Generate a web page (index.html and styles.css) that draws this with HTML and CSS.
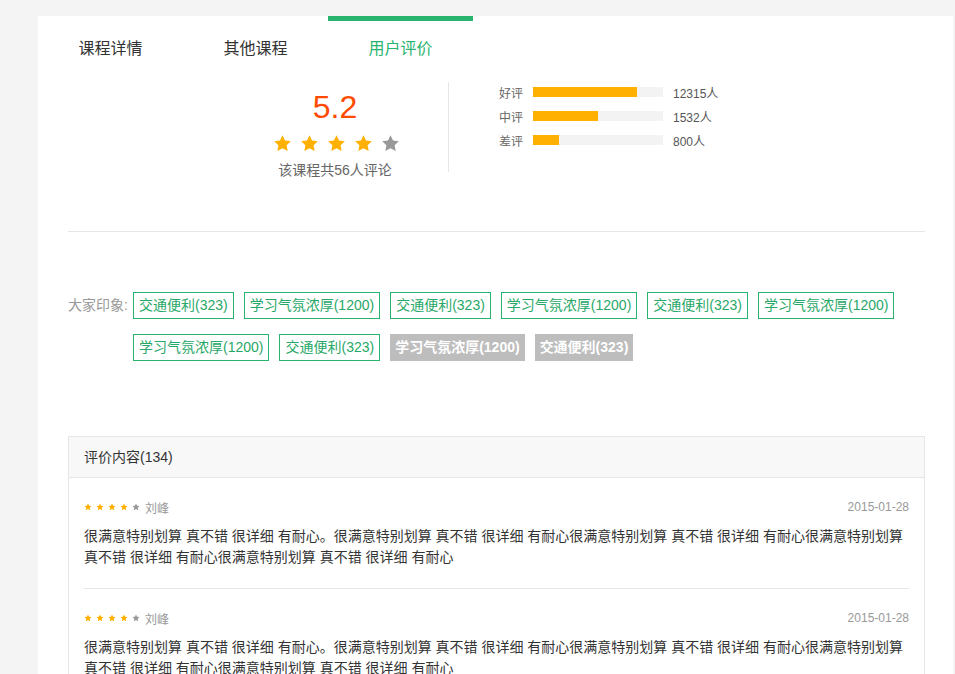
FILE: index.html
```html
<!DOCTYPE html>
<html lang="zh-CN">
<head>
<meta charset="utf-8">
<title>用户评价</title>
<link rel="stylesheet" href="styles.css">
</head>
<body>
<div class="page">
  <nav class="tabs">
    <a class="tab">课程详情</a>
    <a class="tab">其他课程</a>
    <a class="tab active">用户评价</a>
  </nav>

  <div class="inner">
    <section class="summary">
      <div class="score">
        <div class="score-num">5.2</div>
        <div class="stars big">
          <svg viewBox="0 0 24 24"><polygon class="on" points="12,1.5 15.2,8.1 22.5,9.1 17.2,14.2 18.5,21.5 12,18 5.5,21.5 6.8,14.2 1.5,9.1 8.8,8.1"/></svg>
          <svg viewBox="0 0 24 24"><polygon class="on" points="12,1.5 15.2,8.1 22.5,9.1 17.2,14.2 18.5,21.5 12,18 5.5,21.5 6.8,14.2 1.5,9.1 8.8,8.1"/></svg>
          <svg viewBox="0 0 24 24"><polygon class="on" points="12,1.5 15.2,8.1 22.5,9.1 17.2,14.2 18.5,21.5 12,18 5.5,21.5 6.8,14.2 1.5,9.1 8.8,8.1"/></svg>
          <svg viewBox="0 0 24 24"><polygon class="on" points="12,1.5 15.2,8.1 22.5,9.1 17.2,14.2 18.5,21.5 12,18 5.5,21.5 6.8,14.2 1.5,9.1 8.8,8.1"/></svg>
          <svg viewBox="0 0 24 24"><polygon class="off" points="12,1.5 15.2,8.1 22.5,9.1 17.2,14.2 18.5,21.5 12,18 5.5,21.5 6.8,14.2 1.5,9.1 8.8,8.1"/></svg>
        </div>
        <div class="score-text">该课程共56人评论</div>
      </div>
      <div class="vdivider"></div>
      <div class="bars">
        <div class="bar-row">
          <span class="bar-label">好评</span>
          <span class="bar"><span class="bar-fill" style="width:104px"></span></span>
          <span class="bar-count">12315人</span>
        </div>
        <div class="bar-row">
          <span class="bar-label">中评</span>
          <span class="bar"><span class="bar-fill" style="width:65px"></span></span>
          <span class="bar-count">1532人</span>
        </div>
        <div class="bar-row">
          <span class="bar-label">差评</span>
          <span class="bar"><span class="bar-fill" style="width:26px"></span></span>
          <span class="bar-count">800人</span>
        </div>
      </div>
    </section>

    <hr class="hline">

    <section class="impress">
      <div class="impress-label">大家印象:</div>
      <div class="tags">
        <span class="tag">交通便利(323)</span>
        <span class="tag">学习气氛浓厚(1200)</span>
        <span class="tag">交通便利(323)</span>
        <span class="tag">学习气氛浓厚(1200)</span>
        <span class="tag">交通便利(323)</span>
        <span class="tag">学习气氛浓厚(1200)</span>
        <span class="tag">学习气氛浓厚(1200)</span>
        <span class="tag">交通便利(323)</span>
        <span class="tag grey">学习气氛浓厚(1200)</span>
        <span class="tag grey">交通便利(323)</span>
      </div>
    </section>

    <section class="reviews">
      <div class="reviews-head">评价内容(134)</div>
      <div class="review">
        <div class="review-meta">
          <div class="stars small">
            <svg viewBox="0 0 24 24"><polygon class="on" points="12,1.5 15.2,8.1 22.5,9.1 17.2,14.2 18.5,21.5 12,18 5.5,21.5 6.8,14.2 1.5,9.1 8.8,8.1"/></svg>
            <svg viewBox="0 0 24 24"><polygon class="on" points="12,1.5 15.2,8.1 22.5,9.1 17.2,14.2 18.5,21.5 12,18 5.5,21.5 6.8,14.2 1.5,9.1 8.8,8.1"/></svg>
            <svg viewBox="0 0 24 24"><polygon class="on" points="12,1.5 15.2,8.1 22.5,9.1 17.2,14.2 18.5,21.5 12,18 5.5,21.5 6.8,14.2 1.5,9.1 8.8,8.1"/></svg>
            <svg viewBox="0 0 24 24"><polygon class="on" points="12,1.5 15.2,8.1 22.5,9.1 17.2,14.2 18.5,21.5 12,18 5.5,21.5 6.8,14.2 1.5,9.1 8.8,8.1"/></svg>
            <svg viewBox="0 0 24 24"><polygon class="off" points="12,1.5 15.2,8.1 22.5,9.1 17.2,14.2 18.5,21.5 12,18 5.5,21.5 6.8,14.2 1.5,9.1 8.8,8.1"/></svg>
          </div>
          <span class="review-name">刘峰</span>
          <span class="review-date">2015-01-28</span>
        </div>
        <p class="review-text">很满意特别划算 真不错 很详细 有耐心。很满意特别划算 真不错 很详细 有耐心很满意特别划算 真不错 很详细 有耐心很满意特别划算 真不错 很详细 有耐心很满意特别划算 真不错 很详细 有耐心</p>
      </div>
      <div class="review">
        <div class="review-meta">
          <div class="stars small">
            <svg viewBox="0 0 24 24"><polygon class="on" points="12,1.5 15.2,8.1 22.5,9.1 17.2,14.2 18.5,21.5 12,18 5.5,21.5 6.8,14.2 1.5,9.1 8.8,8.1"/></svg>
            <svg viewBox="0 0 24 24"><polygon class="on" points="12,1.5 15.2,8.1 22.5,9.1 17.2,14.2 18.5,21.5 12,18 5.5,21.5 6.8,14.2 1.5,9.1 8.8,8.1"/></svg>
            <svg viewBox="0 0 24 24"><polygon class="on" points="12,1.5 15.2,8.1 22.5,9.1 17.2,14.2 18.5,21.5 12,18 5.5,21.5 6.8,14.2 1.5,9.1 8.8,8.1"/></svg>
            <svg viewBox="0 0 24 24"><polygon class="on" points="12,1.5 15.2,8.1 22.5,9.1 17.2,14.2 18.5,21.5 12,18 5.5,21.5 6.8,14.2 1.5,9.1 8.8,8.1"/></svg>
            <svg viewBox="0 0 24 24"><polygon class="off" points="12,1.5 15.2,8.1 22.5,9.1 17.2,14.2 18.5,21.5 12,18 5.5,21.5 6.8,14.2 1.5,9.1 8.8,8.1"/></svg>
          </div>
          <span class="review-name">刘峰</span>
          <span class="review-date">2015-01-28</span>
        </div>
        <p class="review-text">很满意特别划算 真不错 很详细 有耐心。很满意特别划算 真不错 很详细 有耐心很满意特别划算 真不错 很详细 有耐心很满意特别划算 真不错 很详细 有耐心很满意特别划算 真不错 很详细 有耐心</p>
      </div>
    </section>
  </div>
</div>
</body>
</html>
```

FILE: styles.css
```css
* { box-sizing: border-box; }

html, body {
  margin: 0;
  padding: 0;
  background: #f4f4f4;
}

body {
  font-family: "Liberation Sans", "Noto Sans CJK SC", sans-serif;
  color: #333;
  font-size: 14px;
}

.page {
  width: 915px;
  margin: 16px 0 0 38px;
  background: #fff;
  min-height: 900px;
}

/* tabs */
.tabs {
  display: flex;
}

.tab {
  width: 145px;
  text-align: center;
  border-top: 5px solid transparent;
  line-height: 55px;
  font-size: 16px;
  color: #333;
}

.tab.active {
  border-top-color: #28b46e;
  color: #28b46e;
}

.inner {
  padding: 0 28px 0 30px;
}

/* summary */
.summary {
  display: flex;
  margin-top: 6px;
  height: 90px;
}

.score {
  width: 160px;
  margin-left: 187px;
  padding-top: 7px;
  text-align: center;
}

.score-num {
  font-size: 32px;
  line-height: 36px;
  color: #ff4a00;
}

.stars {
  display: flex;
  justify-content: center;
}

.stars svg { display: block; }
.stars .on { fill: #ffb000; }
.stars .off { fill: #999; }

.stars.big {
  gap: 8px;
  margin-top: 9px;
  margin-left: 2px;
}

.stars.big svg {
  width: 19px;
  height: 19px;
}

.score-text {
  margin-top: 7px;
  font-size: 14px;
  line-height: 20px;
  color: #666;
}

.vdivider {
  width: 1px;
  margin-left: 33px;
  background: #e6e6e6;
}

.bars {
  padding-left: 50px;
  margin-top: -2px;
}

.bar-row {
  display: flex;
  align-items: center;
  height: 24px;
  font-size: 12px;
  color: #555;
}

.bar-label {
  width: 34px;
  color: #666;
}

.bar {
  width: 130px;
  height: 10px;
  background: #f3f3f3;
  display: flex;
}

.bar-fill {
  height: 10px;
  background: #ffb000;
}

.bar-count {
  margin-left: 10px;
}

.hline {
  margin: 59px 0 0 0;
  border: 0;
  height: 1px;
  background: #e6e6e6;
}

/* impressions */
.impress {
  display: flex;
  margin-top: 60px;
}

.impress-label {
  width: 65px;
  flex: none;
  line-height: 27px;
  color: #999;
  font-size: 14px;
}

.tags {
  display: flex;
  flex-wrap: wrap;
  gap: 15px 10px;
  flex: 1;
}

.tag {
  height: 27px;
  line-height: 25px;
  padding: 0 5px;
  border: 1px solid #28b46e;
  color: #28a868;
  font-size: 14px;
  white-space: nowrap;
}

.tag.grey {
  background: #bdbdbd;
  border-color: #bdbdbd;
  color: #fff;
  font-weight: bold;
  padding: 0 4px;
}

/* reviews */
.reviews {
  margin-top: 75px;
  border: 1px solid #e6e6e6;
}

.reviews-head {
  height: 41px;
  line-height: 40px;
  padding-left: 15px;
  background: #f8f8f8;
  border-bottom: 1px solid #e6e6e6;
  font-size: 14px;
  color: #333;
}

.review {
  margin: 0 15px;
  padding: 21px 0 20px;
  border-bottom: 1px solid #e6e6e6;
}

.review-meta {
  display: flex;
  align-items: center;
  height: 16px;
}

.stars.small {
  gap: 4px;
}

.stars.small svg {
  width: 8px;
  height: 8px;
}

.review-name {
  margin-left: 5px;
  font-size: 12px;
  color: #999;
}

.review-date {
  margin-left: auto;
  font-size: 12px;
  color: #999;
}

.review-text {
  margin: 11px 0 0;
  font-size: 14px;
  line-height: 21px;
  color: #333;
}
```
